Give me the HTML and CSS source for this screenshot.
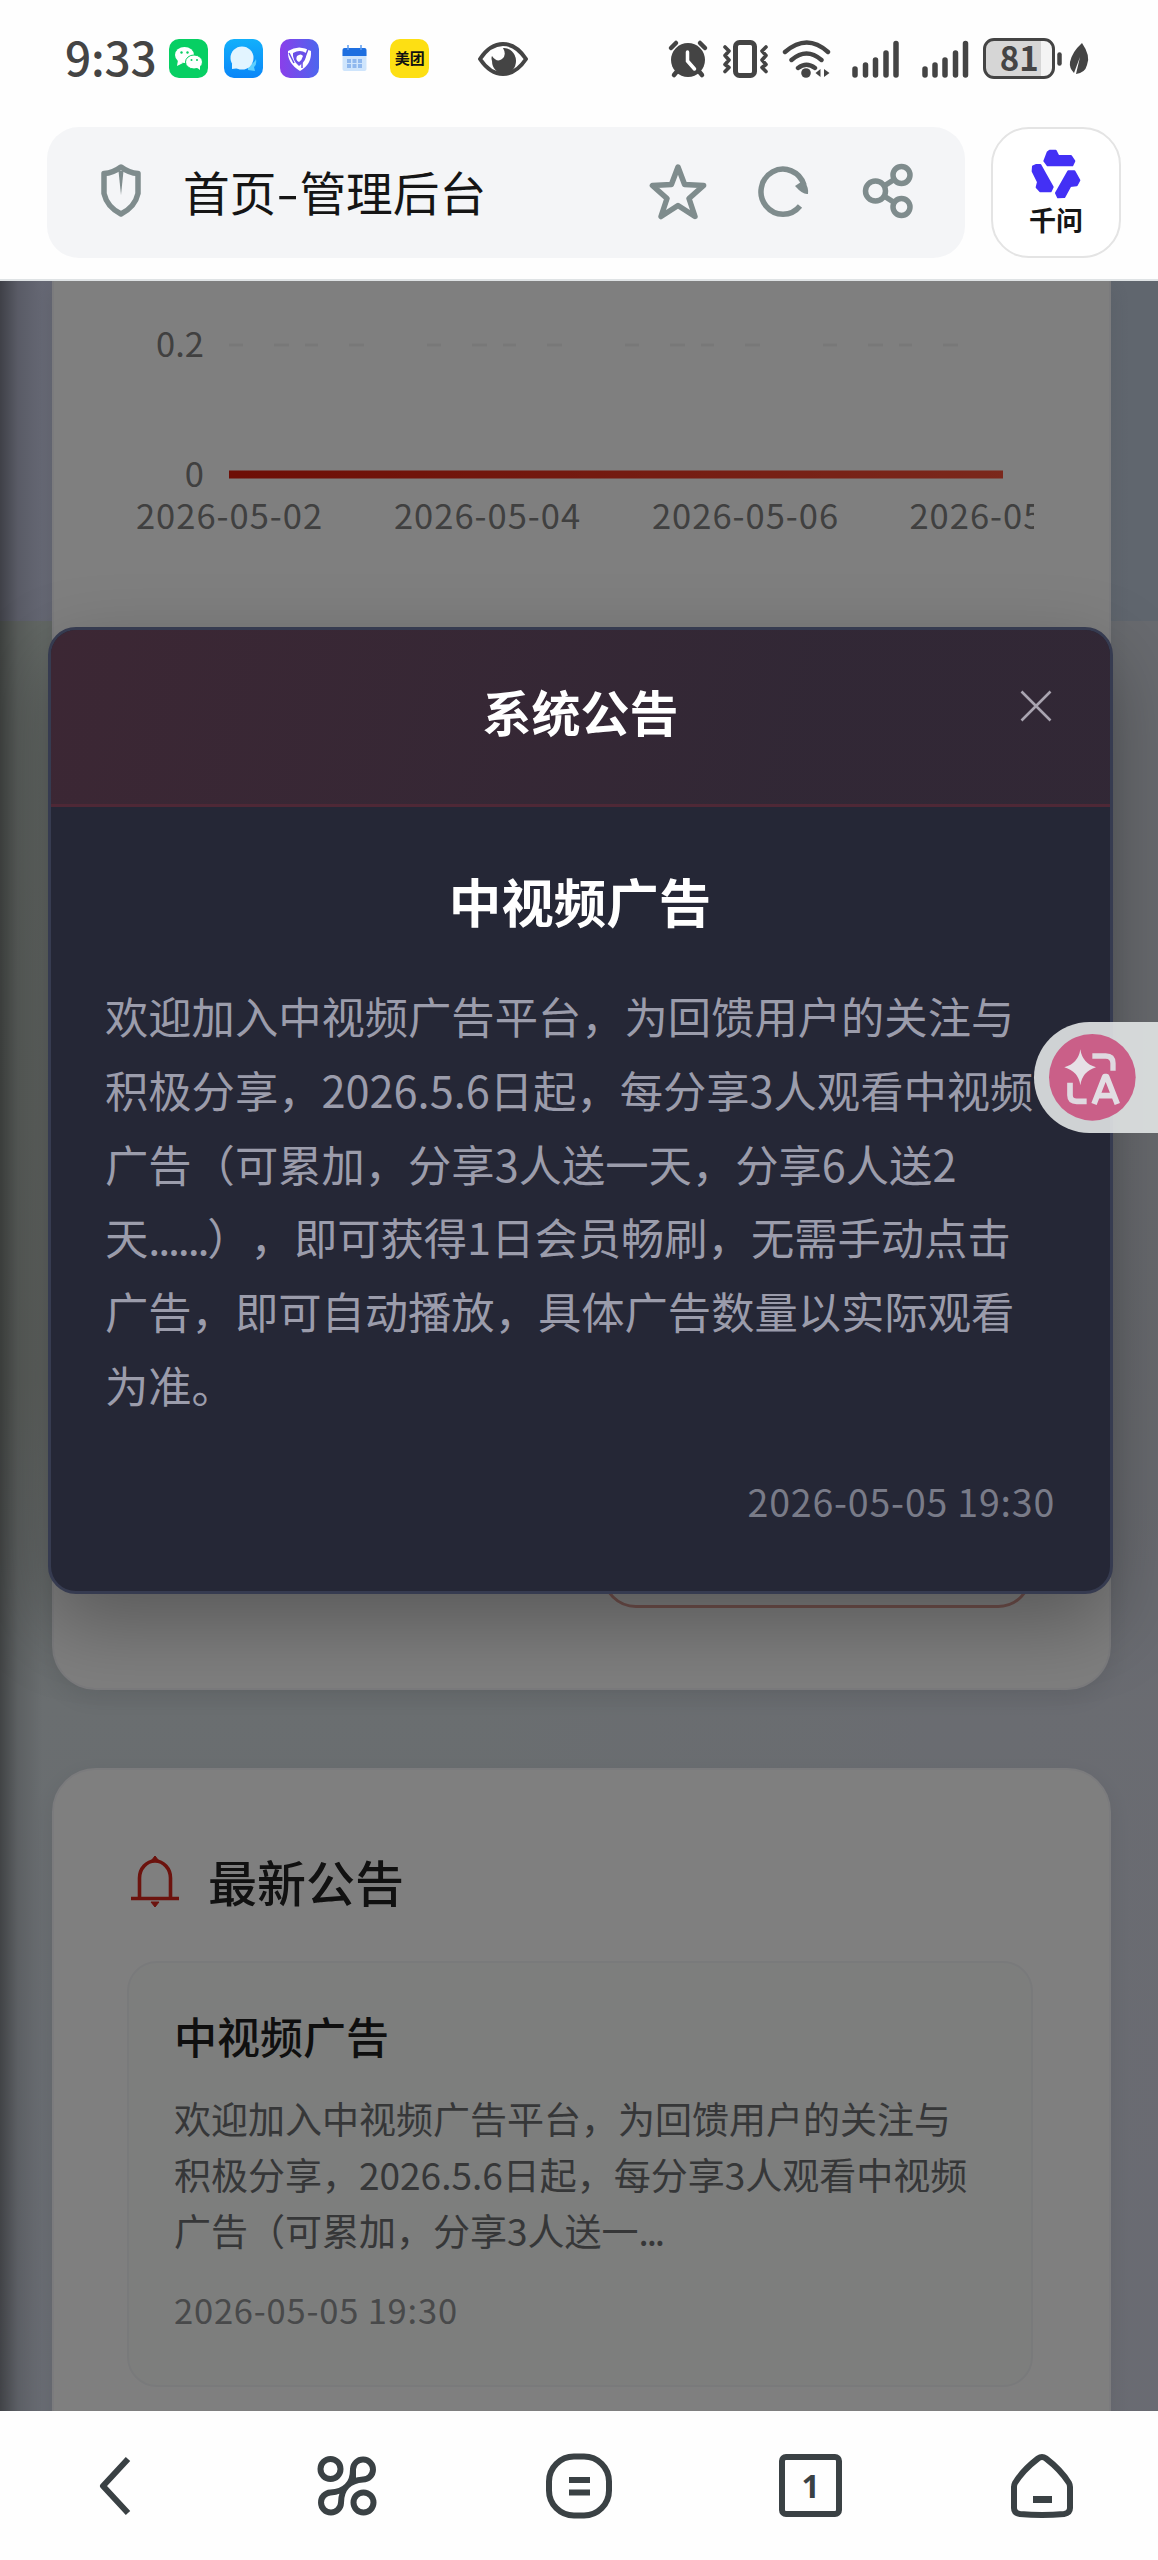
FILE: index.html
```html
<!DOCTYPE html>
<html lang="zh-CN">
<head>
<meta charset="utf-8">
<title>首页-管理后台</title>
<link rel="stylesheet" href="styles.css">
</head>
<body>
<header class="status">
  <div class="clock">9:33</div>
  <div class="notif">
    <svg width="39" height="39" viewBox="0 0 39 39"><rect width="39" height="39" rx="10" fill="#07cf63"/><ellipse cx="15.500" cy="16" rx="9.500" ry="8" fill="#fff"/><path d="M9 21l-1 6 6-3z" fill="#fff"/><ellipse cx="25" cy="23" rx="8.500" ry="7" fill="#fff" stroke="#07cf63" stroke-width="1"/><path d="M27 28l4 3 0-5z" fill="#fff"/><g fill="#07cf63"><circle cx="12.500" cy="13.500" r="1.200"/><circle cx="18.500" cy="13.500" r="1.200"/><circle cx="22.500" cy="21" r="1"/><circle cx="28" cy="21" r="1"/></g></svg>
    <svg width="39" height="39" viewBox="0 0 39 39"><defs><linearGradient id="gb" x1="0" y1="0" x2="0" y2="1"><stop offset="0" stop-color="#12b0fb"/><stop offset="1" stop-color="#0a86f8"/></linearGradient></defs><rect width="39" height="39" rx="10" fill="url(#gb)"/><path d="M24 26q6-1 8-6 1 6-2 8l1 4-7-1z" fill="#5fd0ff"/><circle cx="18" cy="19" r="11.500" fill="#e2f4ff"/><path d="M8 24l0 6 8-1z" fill="#e2f4ff"/></svg>
    <svg width="39" height="39" viewBox="0 0 39 39"><defs><linearGradient id="gp"><stop offset="0" stop-color="#8a3fea"/><stop offset="1" stop-color="#4c66ee"/></linearGradient></defs><rect width="39" height="39" rx="10" fill="url(#gp)"/><path d="M8 12q11-7 23 0 1 13-11 20Q7 24 8 12z" fill="#fff"/><path d="M13 14q7-4 13 0 1 8-7 13Q12 21 13 14z" fill="#6a50e8"/><path d="M17 17q4-3 6 0-1 4-4 6-4-2-2-6z" fill="#fff"/><path d="M9 14l5 10M28 10l-3 8M22 29v-5" stroke="#6a50e8" stroke-width="1.500"/></svg>
    <svg width="39" height="39" viewBox="0 0 39 39"><rect x="7.500" y="12" width="24" height="20" rx="2" fill="#cfe5fc"/><path d="M7.500 17v-6q0-2 2-2h20q2 0 2 2v6z" fill="#1e6fe0"/><path d="M13 6v5M26 6v5" stroke="#5c9cf0" stroke-width="1.500"/><path d="M12 22h15M12 27h15" stroke="#8fb8ee" stroke-width="4" stroke-dasharray="4 1.500"/></svg>
    <span class="meituan">美团</span>
  </div>
  <svg class="eye" width="52" height="38" viewBox="0 0 52 38"><path d="M3 19Q13 4 26 4t23 15Q39 34 26 34T3 19z" fill="none" stroke="#444" stroke-width="4" stroke-linejoin="round"/><path d="M26 8a12 13 0 1 1-11 13q-1-3 0-5 5 7 10 3 5-4 1-11z" fill="#444"/></svg>
  <div class="sys">
    <svg width="388" height="42" viewBox="668 37 388 42">
      <g fill="none" stroke="#444" stroke-linecap="round" stroke-width="4.500"><path d="M673 47l5-5M707 47l-5-5M676 74l5-6M704 74l-5-6"/></g>
      <circle cx="690" cy="59" r="17" fill="#444"/><path d="M689.500 51v9l7 8" fill="none" stroke="#fff" stroke-width="3.500" stroke-linecap="round"/>
      <rect x="737.500" y="41.500" width="19" height="33" rx="4" fill="none" stroke="#444" stroke-width="5"/>
      <path d="M727 46l4 4-4 4.500 4 4.500-4 4.500 4 3-4 4M768 46l-4 4 4 4.500-4 4.500 4 4.500-4 3 4 4" fill="none" stroke="#444" stroke-width="3.600" stroke-linecap="round" stroke-linejoin="round"/>
      <path d="M787 51q22-19 43 0M793.500 59q15-13 30 0M800 67q8.500-6.500 17 0" fill="none" stroke="#444" stroke-width="4.400" stroke-linecap="round"/>
      <circle cx="808" cy="72" r="4.800" fill="#444"/><path d="M822.500 68v8l-5-4zM826 68v8l5.500-4z" fill="#444"/>
      <g stroke="#444" stroke-width="5.500" stroke-linecap="round"><path d="M857 68v6M867.500 64v10M877.500 59v15M888 52v22M898 42.500v31.500"/><path d="M927 68v6M937 64v10M947 59v15M957.500 52v22M967.500 42.500v31.500"/></g>
    </svg>
    <span class="battery">81</span>
    <svg width="36" height="42" viewBox="1058 37 36 42"><path d="M1062.500 53.500v9" stroke="#444" stroke-width="4.500" stroke-linecap="round"/><path d="M1085 42q9 13 5 22-2 8-11 9l4-17-6 16q-5-5-4-11 2-10 12-19z" fill="#444"/></svg>
  </div>
</header>

<div class="toolbar">
  <div class="address">
    <svg width="42" height="56" viewBox="0 0 42 56"><path d="M21 4q8 6 17 6.500v20Q35 44 21 51 7 44 4 30.500v-20Q13 10 21 4z" fill="none" stroke="#7f8c8d" stroke-width="5.500" stroke-linejoin="round"/><path d="M18.500 8h5L21 32z" fill="#7f8c8d"/></svg>
    <span class="address-title">首页<i>-</i>管理后台</span>
    <svg width="58" height="58" viewBox="0 0 58 58"><path d="M29 5l6.600 17.500 19 1L40 36.500l6 18-17-11-17 11 6-18L3.400 23.500l19-1z" fill="none" stroke="#7f8c8d" stroke-width="5.500" stroke-linejoin="round"/></svg>
    <svg width="54" height="54" viewBox="0 0 54 54"><path d="M43 42a22 22.500 0 1 1 4-21" fill="none" stroke="#7f8c8d" stroke-width="5.500"/><path d="M38 22l9-6q5 8 4 14-5 1-13-8z" fill="#7f8c8d"/></svg>
    <svg width="54" height="56" viewBox="0 0 54 56"><g fill="none" stroke="#7f8c8d" stroke-width="5.500"><circle cx="14.500" cy="28" r="10"/><circle cx="40.500" cy="12" r="8.500"/><circle cx="40.500" cy="44" r="8.500"/><path d="M23 23l11-7M23 33l11 7"/></g></svg>
  </div>
  <div class="qwen">
    <svg width="50" height="50" viewBox="62 58 150 150"><g fill="#4330f5" stroke="#4330f5" stroke-width="6" stroke-linejoin="round"><path d="M112 68l6-5h18l8 16h38l10 15-6 13h-74l-10-13z"/><path d="M68 110l10-4h12l37 66-6 13H90l-11-12 4-16-16-32z"/><path d="M174 125h18l15 27-8 15-19 2-18 33-19 1-6-13z"/></g></svg>
    <span>千问</span>
  </div>
</div>

<main class="viewport">
  <div class="page">
    <section class="card card-top">
      <svg class="chart" width="982" height="300" viewBox="52 281 982 300">
        <defs><linearGradient id="line" gradientUnits="userSpaceOnUse" x1="229" y1="0" x2="1003" y2="0"><stop offset="0" stop-color="#dc1c0c"/><stop offset="1" stop-color="#f65038"/></linearGradient></defs>
        <path d="M229 345H966" stroke="#f1f1f1" stroke-width="3" stroke-dasharray="14 31 15 16 13 31 15 63"/>
        <path d="M229 474.500H1003" stroke="url(#line)" stroke-width="8"/>
        <g class="axis-y"><text x="204" y="357">0.2</text><text x="204" y="487">0</text></g>
        <g class="axis-x"><text x="229.500" y="529">2026-05-02</text><text x="487.500" y="529">2026-05-04</text><text x="745.500" y="529">2026-05-06</text><text x="1003" y="529">2026-05-08</text></g>
      </svg>
      <div class="pill"></div>
    </section>
    <section class="card card-news">
      <h2><svg width="50" height="52" viewBox="0 0 50 52"><path d="M9.500 42V23a15.500 17 0 0 1 31 0v19M1 43.500h48" fill="none" stroke="#d8261c" stroke-width="3.600"/><path d="M25 1l4 5h-8zM21 47h8l-4 5z" fill="#d8261c" stroke="#d8261c"/></svg>最新公告</h2>
      <article class="news">
        <h3>中视频广告</h3>
        <p><span>欢迎加入中视频广告平台，为回馈用户的关注与</span><span>积极分享，<b>2026.5.6</b>日起，每分享<b>3</b>人观看中视频</span><span>广告（可累加，分享<b>3</b>人送一<b class="dots">...</b></span></p>
        <time>2026-05-05 19:30</time>
      </article>
    </section>
  </div>
  <div class="overlay">
    <div class="modal">
      <div class="modal-head">
        <h2>系统公告</h2>
        <svg class="close" width="32" height="32" viewBox="0 0 32 32"><path d="M1.500 1.500l29 29M30.500 1.500l-29 29" stroke="#a9a4b0" stroke-width="2.600"/></svg>
      </div>
      <div class="modal-body">
        <h3>中视频广告</h3>
        <p><span>欢迎加入中视频广告平台，为回馈用户的关注与</span><span>积极分享，<b>2026.5.6</b>日起，每分享<b>3</b>人观看中视频</span><span>广告（可累加，分享<b>3</b>人送一天，分享<b>6</b>人送<b>2</b></span><span>天<b class="dots">......</b>），即可获得<b>1</b>日会员畅刷，无需手动点击</span><span>广告，即可自动播放，具体广告数量以实际观看</span><span>为准。</span></p>
        <time>2026-05-05 19:30</time>
      </div>
    </div>
  </div>
  <div class="fab">
    <svg width="87" height="87" viewBox="88 72 261 261"><circle cx="218" cy="202" r="130" fill="#ca5f88"/><path d="M182 118q6 42 47 54-41 12-47 54-6-42-48-54 42-12 48-54z" fill="#e6e0e6"/><path d="M218 138h40q22 0 22 22v22" fill="none" stroke="#dfd9e0" stroke-width="16"/><path d="M151 218v38q0 18 20 18h30" fill="none" stroke="#dfd9e0" stroke-width="17"/><path d="M223 282l32-82h6l32 82M235 257h46" fill="none" stroke="#e2dde3" stroke-width="17" stroke-linejoin="round"/></svg>
  </div>
</main>

<nav class="nav">
  <span><svg width="72" height="72" viewBox="0 0 72 72"><path d="M48 9L23 36l25 27" fill="none" stroke="#3a4144" stroke-width="6" stroke-linejoin="round"/></svg></span>
  <span><svg width="72" height="72" viewBox="0 0 72 72"><g fill="none" stroke="#3a4144" stroke-width="6"><circle cx="19.500" cy="19" r="10"/><circle cx="52.500" cy="52.500" r="10"/><path d="M42 31V19a10 10 0 1 1 10 10.500Q42 30 36 36q-6 6-16.500 6.500A10 10 0 1 0 30 53Q30 42 36 36q6-5 6-17"/></g></svg></span>
  <span><svg width="72" height="72" viewBox="0 0 72 72"><rect x="6" y="6.500" width="60" height="59" rx="25" fill="none" stroke="#3a4144" stroke-width="6"/><path d="M26 30h21M26 42.500h21" stroke="#3a4144" stroke-width="6"/></svg></span>
  <span class="tabs">1</span>
  <span><svg width="72" height="72" viewBox="0 0 72 72"><path d="M32 8.500q4-3 8 0Q55 20 63 33q1 2 1 4v21q0 5-6 6-22 2-44 0-6-1-6-6V37q0-2 1-4Q17 20 32 8.500z" fill="none" stroke="#3a4144" stroke-width="6"/><path d="M27 49.500h19" stroke="#3a4144" stroke-width="7"/></svg></span>
</nav>
</body>
</html>
```
FILE: styles.css
```css
* { box-sizing: border-box; margin: 0; padding: 0; }
html { text-spacing-trim: space-all; }
body {
  width: 1158px;
  height: 2560px;
  display: flex;
  flex-direction: column;
  background: #fefefe;
  overflow: hidden;
  font-family: "Noto Sans CJK SC", sans-serif;
}
svg { display: block; flex: none; }

.status {
  height: 117px;
  display: flex;
  align-items: center;
  padding-left: 65px;
  color: #444;
}
.clock { width: 104px; padding-bottom: 5px; font-size: 46px; font-weight: 500; line-height: 1; letter-spacing: -0.2px; }
.notif { display: flex; gap: 16.300px; }
.meituan {
  width: 39px;
  height: 39px;
  border-radius: 10px;
  background: #fddf13;
  color: #111;
  font-size: 15px;
  font-weight: 700;
  line-height: 38px;
  text-align: center;
}
.eye { margin-left: 48px; }
.sys { display: flex; align-items: center; margin-left: 137px; }
.battery {
  width: 72px;
  height: 41px;
  margin-left: -71px;
  border: 3.500px solid #444;
  border-radius: 11px;
  background: linear-gradient(90deg, #d6d6d6 84%, #f4f4f4 84%);
  font-size: 33px;
  font-weight: 700;
  line-height: 32px;
  text-align: center;
  z-index: 1;
}

.toolbar {
  height: 164px;
  display: flex;
  align-items: flex-start;
  gap: 26px;
  padding: 10px 37px 0 47px;
  border-bottom: 2px solid #dfe3e5;
}
.address {
  flex: 1;
  height: 131px;
  display: flex;
  align-items: center;
  border-radius: 32px;
  background: #f4f5f7;
  padding: 0 50px 3px 53px;
}
.address-title { flex: 1; margin-left: 41px; padding-bottom: 2px; font-size: 46.700px; color: #151515; white-space: nowrap; }
.address-title i { display: inline-block; width: 23px; font-style: normal; text-align: center; transform: scaleX(1.400); }
.address svg + svg { margin-left: 50px; }
.qwen {
  width: 130px;
  height: 131px;
  display: flex;
  flex-direction: column;
  align-items: center;
  border: 2px solid #e4e4e4;
  border-radius: 38px;
  padding-top: 20px;
  background: #fff;
}
.qwen span { font-size: 27px; font-weight: 700; line-height: 40px; margin-top: 1px; color: #161616; }

.viewport {
  height: 2130px;
  position: relative;
  overflow: hidden;
}
.page {
  height: 100%;
  padding: 0 47px 0 52px;
  display: flex;
  flex-direction: column;
  gap: 78px;
  background:
    linear-gradient(90deg, rgba(0,0,0,.38), rgba(0,0,0,.12) 18px, rgba(0,0,0,0) 42px),
    linear-gradient(90deg, #ccd0e8, #c0ccdc) 0 0 / 100% 340px no-repeat,
    linear-gradient(90deg, rgba(212,214,228,0) 40%, rgba(212,214,228,.75)),
    linear-gradient(180deg, #c8d2cc 340px, #c4ccc6 1100px, #d4dce0 1420px, #d2d8e6);
}
.card { background: #fff; border: 2px solid #f6f6fa; box-shadow: 0 8px 20px rgba(60,70,80,.1); }
.card-top {
  height: 1409px;
  flex: none;
  border-top: 0;
  border-radius: 0 0 44px 44px;
  display: flex;
  flex-direction: column;
  justify-content: space-between;
  padding-bottom: 80px;
}
.chart { margin-left: -2px; }
.chart text { font-size: 34.500px; fill: #808080; }
.axis-y { text-anchor: end; }
.axis-x { text-anchor: middle; letter-spacing: 1px; }
.pill {
  align-self: flex-end;
  width: 430px;
  height: 90px;
  margin-right: 77px;
  border: 3px solid #e0a098;
  border-radius: 34px;
}
.card-news {
  flex: none;
  height: 720px;
  border-radius: 44px 44px 0 0;
  padding: 74px 76px 0 73px;
}
.card-news h2 {
  height: 74px;
  display: flex;
  align-items: center;
  gap: 28px;
  font-size: 49px;
  font-weight: 500;
  line-height: 74px;
  color: #222;
  padding-left: 3px;
}
.news {
  height: 426px;
  margin-top: 43px;
  border: 2px solid #f3f4f7;
  border-radius: 30px;
  background: #fafcfb;
  padding: 40px 0 0 45px;
}
.news h3 { font-size: 43px; font-weight: 500; line-height: 64px; color: #1e1e1e; }
.news p { margin-top: 23px; font-size: 37px; line-height: 56px; color: #6c6e70; }
.news time { display: block; margin-top: 28px; font-size: 34.500px; line-height: 46px; letter-spacing: .8px; color: #909294; }
p span { display: block; white-space: nowrap; }
p b { font-weight: 400; }
p .dots { letter-spacing: -2.200px; }

.overlay {
  position: absolute;
  inset: 0;
  display: flex;
  align-items: flex-start;
  justify-content: center;
  padding: 346px 0 0 3px;
  background: rgba(0,0,0,.5);
}
.modal {
  width: 1065px;
  height: 967px;
  border: 3px solid #363b50;
  border-radius: 28px;
  background: #252736;
  box-shadow: 0 30px 80px rgba(0,0,0,.3);
  overflow: hidden;
}
.modal-head {
  height: 177px;
  display: grid;
  grid-template-columns: 1fr auto 1fr;
  align-items: start;
  border-bottom: 3px solid #4e2836;
  background: linear-gradient(105deg, #3c2734, #35273450 70%), #302836;
}
.modal-head h2 { grid-column: 2; margin-top: 46px; font-size: 49px; font-weight: 700; line-height: 70px; color: #fff; }
.close { justify-self: end; margin: 60px 58px 0 0; }
.modal-body { padding: 55px 55px 0 54px; color: #9b9cab; }
.modal-body h3 { font-size: 52.500px; font-weight: 700; line-height: 76px; text-align: center; color: #fff; }
.modal-body p { margin-top: 41px; font-size: 43.300px; line-height: 73.800px; }
.modal-body time { display: block; margin-top: 54px; font-size: 37.500px; line-height: 50px; letter-spacing: .8px; text-align: right; color: #797b88; }

.fab {
  position: absolute;
  top: 741px;
  right: 0;
  width: 124px;
  height: 111px;
  border-radius: 56px 0 0 56px;
  background: rgba(226,229,230,.9);
  display: flex;
  align-items: center;
  padding-left: 15px;
}

.nav { height: 149px; display: flex; }
.nav span { flex: 1; display: flex; align-items: center; justify-content: center; }
.nav .tabs {
  flex: none;
  width: 63px;
  height: 63px;
  margin: 43px 84.300px 0;
  border: 6px solid #3a4144;
  border-radius: 7px;
  font: 700 32px "Open Sans", sans-serif;
  color: #3a4144;
}
```
